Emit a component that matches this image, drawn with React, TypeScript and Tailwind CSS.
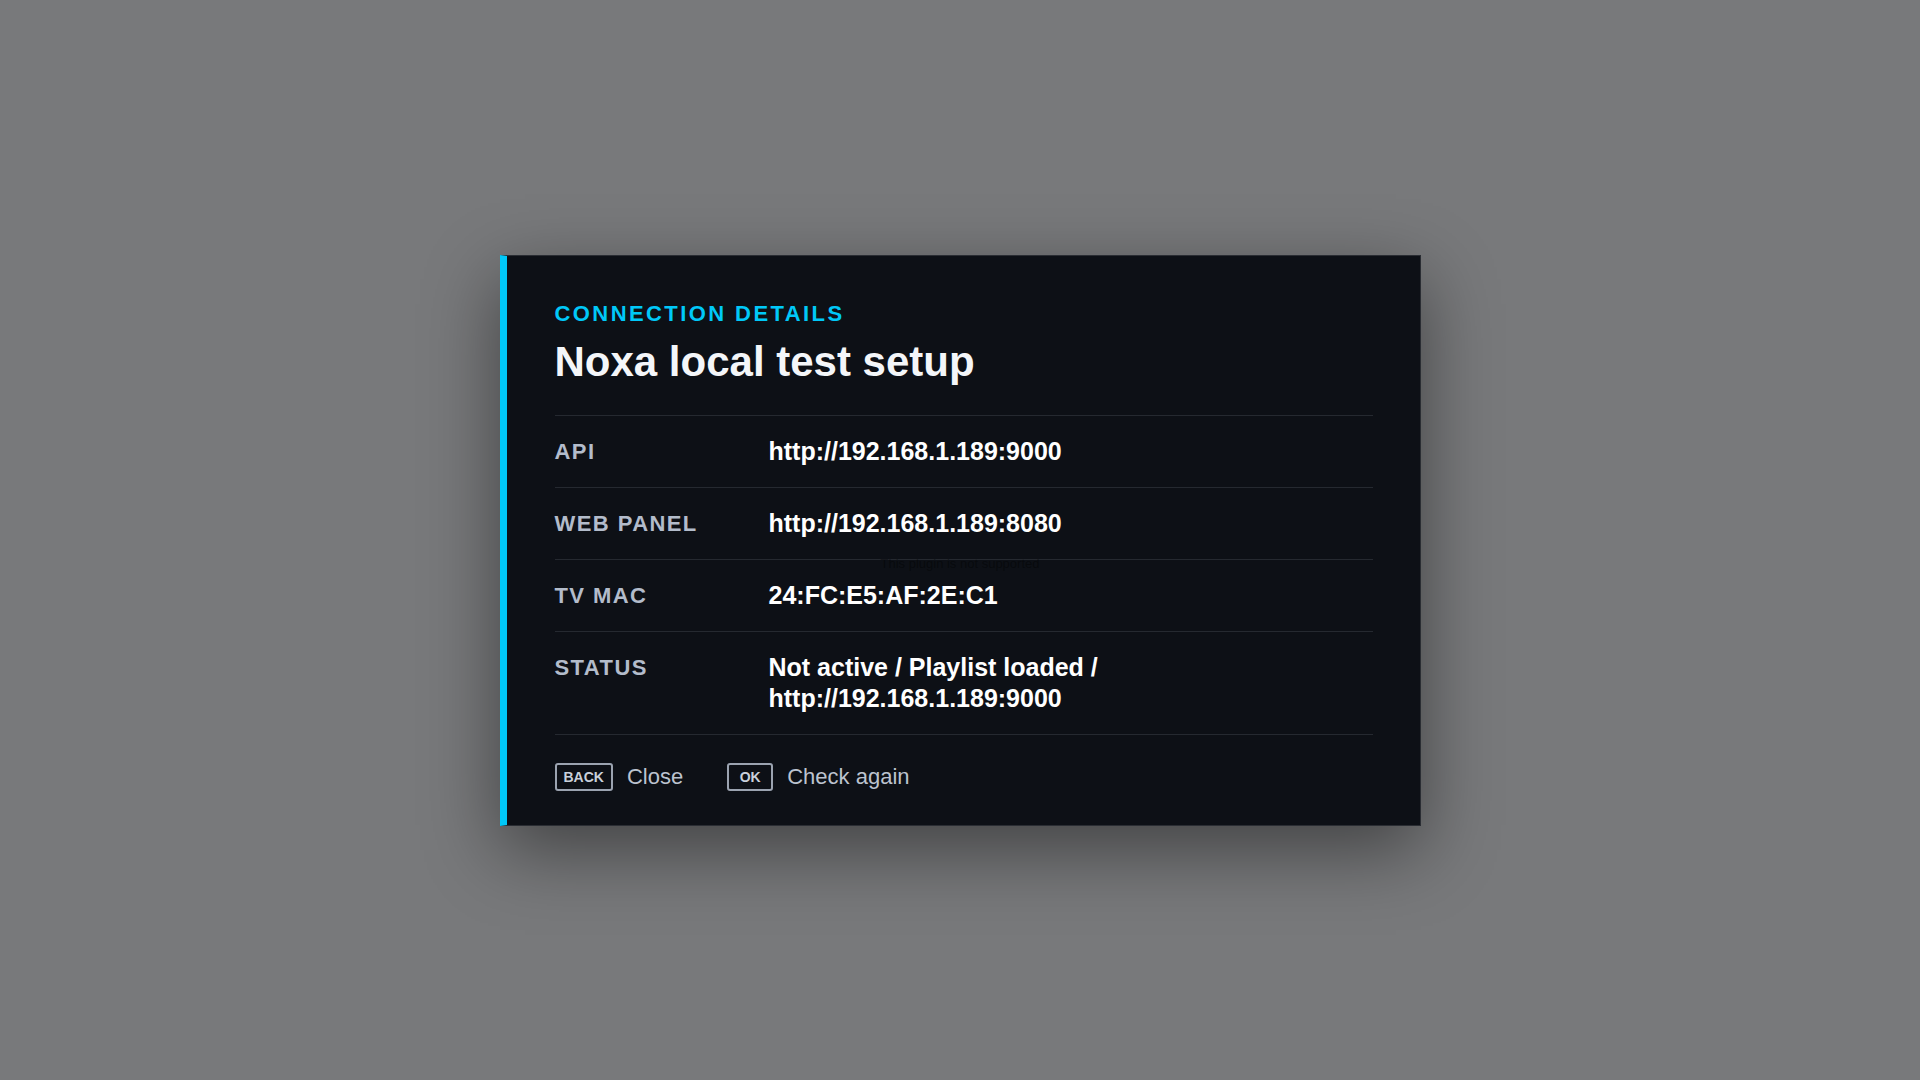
import React from "react";

const rows: { label: string; value: React.ReactNode }[] = [
  { label: "API", value: "http://192.168.1.189:9000" },
  { label: "WEB PANEL", value: "http://192.168.1.189:8080" },
  { label: "TV MAC", value: "24:FC:E5:AF:2E:C1" },
  {
    label: "STATUS",
    value: (
      <>
        Not active / Playlist loaded /
        <br />
        http://192.168.1.189:9000
      </>
    ),
  },
];

function Key({ children }: { children: React.ReactNode }) {
  return (
    <span className="flex h-[28px] min-w-[46px] items-center justify-center rounded-[3px] border-2 border-[#9ba3b0] px-[7px] text-[14px] font-bold leading-none text-[#c9d0db]">
      {children}
    </span>
  );
}

export default function App() {
  return (
    <div
      className="relative flex h-screen w-full items-center justify-center bg-[#78797b]"
      style={{ fontFamily: '"Liberation Sans", Arial, sans-serif' }}
    >
      <div className="w-[921px] border border-l-[7px] border-[#2a2d33] border-l-[#00c8f8] bg-[#0d1016] pb-[34px] pl-12 pr-[47px] pt-[45px] shadow-[0_24px_70px_rgba(0,0,0,0.45)]">
        <div className="border-b border-[#252930] pb-7">
          <div className="text-[22px] font-bold uppercase leading-[26px] tracking-[0.11em] text-[#00c8f8]">
            Connection details
          </div>
          <div className="mt-2.5 text-[42px] font-bold leading-[50px] text-[#f4f6f9]">
            Noxa local test setup
          </div>
        </div>
        {rows.map((r) => (
          <div
            key={r.label}
            className="grid grid-cols-[214px_1fr] items-start border-b border-[#252930] py-5"
          >
            <div className="text-[22px] font-bold leading-[31px] tracking-[0.065em] text-[#b3bccb]">
              {r.label}
            </div>
            <div className="text-[25px] font-bold leading-[31px] text-white">{r.value}</div>
          </div>
        ))}
        <div className="flex items-center gap-11 pt-[28px]">
          <div className="flex items-center gap-3.5">
            <Key>BACK</Key>
            <span className="text-[22px] leading-[28px] text-[#bcc3cf]">Close</span>
          </div>
          <div className="flex items-center gap-3.5">
            <Key>OK</Key>
            <span className="text-[22px] leading-[28px] text-[#bcc3cf]">Check again</span>
          </div>
        </div>
      </div>
      <div className="pointer-events-none absolute left-0 right-0 top-[556px] text-center text-[13px] leading-4 text-black/40">
        This plugin is not supported
      </div>
    </div>
  );
}
